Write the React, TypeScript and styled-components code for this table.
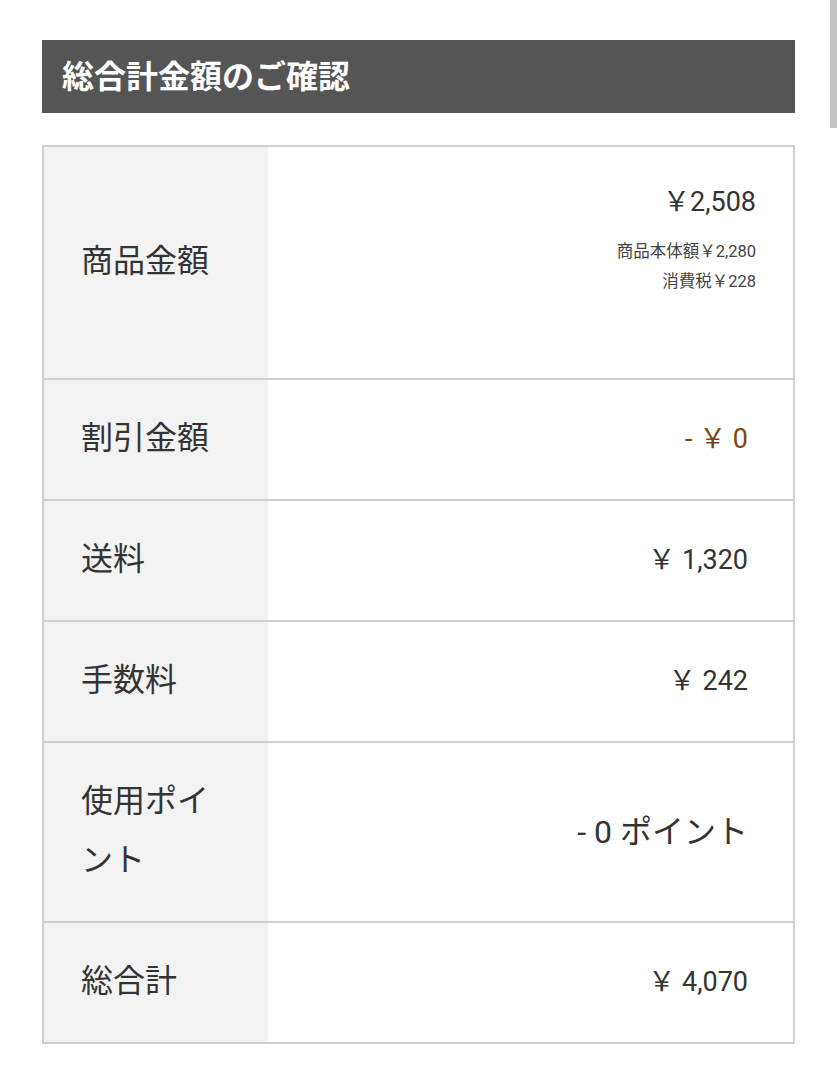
import type { FC } from "react";
import { styled, createGlobalStyle } from "styled-components";

const GlobalStyle = createGlobalStyle`
  html, body {
    margin: 0;
    padding: 0;
    background: #fff;
  }
  body {
    font-family: Roboto, "Noto Sans CJK JP", "Noto Sans", sans-serif;
    color: #333;
  }
`;

const Page = styled.div`
  padding: 40px 42px 40px 42px;
`;

const TitleBar = styled.div`
  display: flex;
  align-items: center;
  height: 73px;
  padding: 0 0 4px 20px;
  box-sizing: border-box;
  background: #555555;
`;

const Title = styled.h2`
  margin: 0;
  color: #fff;
  font-family: "Noto Sans CJK JP", sans-serif;
  font-size: 32px;
  font-weight: 700;
  line-height: 1.2;
`;

const Table = styled.div`
  margin-top: 32px;
  border: 2px solid #cfcfcf;
`;

const Row = styled.div<{ $minHeight?: number }>`
  display: grid;
  grid-template-columns: 224px 1fr;
  min-height: ${({ $minHeight }) => ($minHeight ? `${$minHeight}px` : "auto")};
  & + & {
    border-top: 2px solid #cfcfcf;
  }
`;

const Label = styled.div`
  display: flex;
  align-items: center;
  padding: 26px 30px 34px 37px;
  background: #f3f3f3;
  font-family: "Noto Sans CJK JP", sans-serif;
  font-size: 32px;
  line-height: 59px;
  color: #333;
`;

const Value = styled.div<{ $color?: string; $size?: number }>`
  display: flex;
  align-items: center;
  justify-content: flex-end;
  padding: 0 45px 7px 20px;
  font-size: ${({ $size }) => $size ?? 27}px;
  color: ${({ $color }) => $color ?? "#333"};
`;

const ProductValue = styled.div`
  display: flex;
  flex-direction: column;
  padding: 26px 37px 0 20px;
  text-align: right;
`;

const Amount = styled.div`
  font-size: 27px;
  line-height: 59px;
  color: #333;
`;

const Breakdown = styled.div<{ $first?: boolean }>`
  margin-top: ${({ $first }) => ($first ? "5px" : "0")};
  font-size: 16.5px;
  line-height: 30px;
  color: #444;
`;

const Scrollbar = styled.div`
  position: fixed;
  top: 0;
  right: 0;
  width: 7px;
  height: 128px;
  background: #c4c4c4;
`;

interface SimpleRow {
  label: string;
  value: string;
  color?: string;
  size?: number;
}

const rows: SimpleRow[] = [
  { label: "割引金額", value: "- ￥ 0", color: "#7a4610" },
  { label: "送料", value: "￥ 1,320" },
  { label: "手数料", value: "￥ 242" },
  { label: "使用ポイント", value: "- 0 ポイント", size: 32 },
  { label: "総合計", value: "￥ 4,070" },
];

const App: FC = () => {
  return (
    <>
      <GlobalStyle />
      <Page>
        <TitleBar>
          <Title>総合計金額のご確認</Title>
        </TitleBar>
        <Table>
          <Row $minHeight={231}>
            <Label>商品金額</Label>
            <ProductValue>
              <Amount>￥2,508</Amount>
              <Breakdown $first>商品本体額￥2,280</Breakdown>
              <Breakdown>消費税￥228</Breakdown>
            </ProductValue>
          </Row>
          {rows.map((row) => (
            <Row key={row.label}>
              <Label>{row.label}</Label>
              <Value $color={row.color} $size={row.size}>
                {row.value}
              </Value>
            </Row>
          ))}
        </Table>
      </Page>
      <Scrollbar />
    </>
  );
};

export default App;
